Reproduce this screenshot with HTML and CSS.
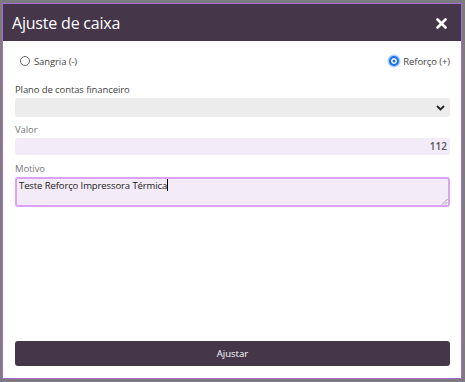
FILE: index.html
```html
<!DOCTYPE html>
<html lang="pt">
<head>
<meta charset="utf-8">
<link rel="stylesheet" href="styles.css">
</head>
<body>
<div class="modal">
  <div class="modal-header">
    <h1 class="title">Ajuste de caixa</h1>
    <svg class="close" width="11" height="11" viewBox="0 0 11 11"><path d="M1.5 1.5 L9.5 9.5 M9.5 1.5 L1.5 9.5" stroke="#fff" stroke-width="2.6" stroke-linecap="round"/></svg>
  </div>
  <div class="modal-body">
    <div class="radios">
      <label class="radio"><span class="dot"></span>Sangria (-)</label>
      <label class="radio"><span class="dot checked"></span>Reforço (+)</label>
    </div>
    <div class="field first">
      <div class="label">Plano de contas financeiro</div>
      <div class="select">
        <svg width="9" height="6" viewBox="0 0 9 6"><path d="M1 1 L4.5 4.5 L8 1" fill="none" stroke="#222" stroke-width="1.8"/></svg>
      </div>
    </div>
    <div class="field">
      <div class="label muted">Valor</div>
      <div class="input value">112</div>
    </div>
    <div class="field motivo">
      <div class="label muted">Motivo</div>
      <div class="textarea">Teste Reforço Impressora Térmica<span class="caret"></span>
        <svg class="grip" width="7" height="7" viewBox="0 0 7 7"><path d="M6.5 1 L1 6.5 M6.5 4 L4 6.5" stroke="#888" stroke-width="0.8"/></svg>
      </div>
    </div>
    <div class="spacer"></div>
    <div class="btn">Ajustar</div>
  </div>
</div>
</body>
</html>
```

FILE: styles.css
```css
* { box-sizing: border-box; }
html, body { margin: 0; padding: 0; }
body {
  width: 465px;
  height: 382px;
  background: #7d7b7e;
  font-family: "Open Sans", "Noto Sans", sans-serif;
  padding: 3px 3px 3px 2px;
  overflow: hidden;
}
.modal {
  width: 460px;
  height: 376px;
  border: 1px solid #a56ad6;
  background: #fff;
  display: flex;
  flex-direction: column;
}
.modal-header {
  height: 37px;
  background: #45364a;
  display: flex;
  align-items: center;
  justify-content: space-between;
  padding: 0 14px 0 9px;
  flex: none;
}
.title {
  margin: 0;
  font-size: 16px;
  font-weight: 400;
  color: #fff;
  letter-spacing: -0.2px;
}
.close { margin-top: 1px; }
.modal-body {
  flex: 1;
  display: flex;
  flex-direction: column;
  padding: 13px 11px 12px 12px;
}
.radios {
  display: flex;
  justify-content: space-between;
  padding: 0 0 0 5px;
  height: 14px;
}
.radio {
  display: flex;
  align-items: center;
  font-size: 9.5px;
  color: #444;
  gap: 4px;
  letter-spacing: -0.1px;
}
.dot {
  width: 10px;
  height: 10px;
  border-radius: 50%;
  border: 1px solid #666;
  background: #fff;
}
.dot.checked {
  border: 2px solid #1a73e8;
  background: #1a73e8;
  box-shadow: inset 0 0 0 1.5px #fff, 0 0 0 1.5px #aecdf7;
}
.field { margin-top: 7px; }
.field.first { margin-top: 16px; }
.field.motivo { margin-top: 8px; }
.label {
  font-size: 9.5px;
  color: #444;
  height: 12px;
  line-height: 12px;
  margin-bottom: 2px;
  letter-spacing: -0.1px;
}
.label.muted { color: #777; }
.select {
  height: 19px;
  background: #ececec;
  border-radius: 3px;
  display: flex;
  align-items: center;
  justify-content: flex-end;
  padding-right: 5px;
}
.input {
  height: 17px;
  background: #f3ebf8;
  border-radius: 3px;
}
.value {
  text-align: right;
  font-size: 10px;
  font-weight: 600;
  color: #555;
  line-height: 17px;
  padding-right: 3px;
}
.textarea {
  position: relative;
  height: 30px;
  background: #f3ebf8;
  border: 2px solid #d8a4f5;
  border-radius: 3px;
  font-size: 9.5px;
  color: #222;
  padding: 0 2px;
  line-height: 13px;
  letter-spacing: -0.1px;
}
.caret {
  display: inline-block;
  width: 1px;
  height: 12px;
  background: #000;
  vertical-align: -2px;
}
.grip { position: absolute; right: 0; bottom: 0; }
.spacer { flex: 1; }
.btn {
  height: 25px;
  background: #45364a;
  border-radius: 3px;
  color: #fff;
  font-size: 9.5px;
  display: flex;
  align-items: center;
  justify-content: center;
}
```
